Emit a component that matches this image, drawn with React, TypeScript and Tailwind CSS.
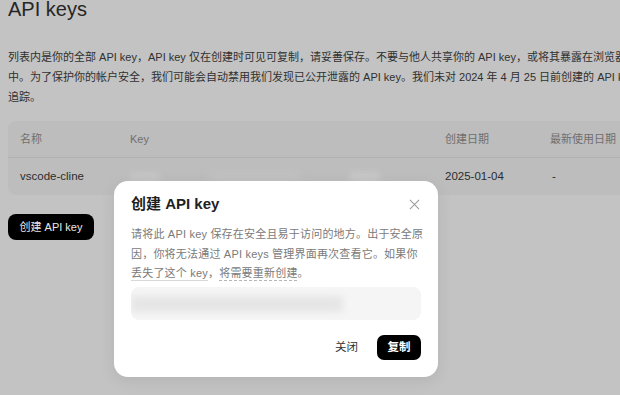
const font = { fontFamily: '"Liberation Sans", "Noto Sans CJK SC", sans-serif' }

function CreatedKeyModal() {
  return (
    <div className="absolute left-[114px] top-[181px] w-[324px] rounded-[14px] bg-white px-[17px] pb-[17px] pt-[12px] shadow-[0_4px_16px_rgba(0,0,0,0.08)]">
      <div className="flex h-[22px] items-center justify-between">
        <h3 className="text-[15px] font-semibold leading-[22px] text-[#1f1f1f]">创建 API key</h3>
        <svg width="11" height="11" viewBox="0 0 12 12" className="mr-[1px]" fill="none" stroke="#9a9a9a" strokeWidth="1.1">
          <path d="M1 1l10 10M11 1L1 11" />
        </svg>
      </div>
      <p className="mt-[10px] whitespace-nowrap text-[11px] leading-[19.5px] tracking-[0.2px] text-[#7a7a7a]">
        请将此 API key 保存在安全且易于访问的地方。出于安全原
        <br />
        因，你将无法通过 API keys 管理界面再次查看它。如果你
        <br />
        <span className="underline decoration-[#d8d8d8] underline-offset-[3px]">丢失了这个 key</span>，
        <span className="underline decoration-dashed decoration-[#b5b5b5] underline-offset-[3px]">将需要重新创建</span>。
      </p>
      <div className="mt-[3.5px] flex h-[33px] items-center overflow-hidden rounded-lg bg-[#f5f5f5]">
        <div className="h-[16px] w-[212px] bg-[#e6e6e6] blur-[3px]" />
      </div>
      <div className="mt-[15px] flex items-center justify-end gap-[19px]">
        <span className="text-[11.5px] text-[#333]">关闭</span>
        <button className="h-[25px] w-[44px] rounded-[7px] bg-black text-[11.5px] font-semibold text-white">复制</button>
      </div>
    </div>
  )
}

export default function App() {
  return (
    <div className="relative h-[395px] w-[620px] overflow-hidden bg-[#c3c3c3]" style={font}>
      <div className="pl-[8px]">
        <h1 className="text-[20px] font-medium leading-[18px] text-[#262626]">API keys</h1>

        <p className="mt-[29px] whitespace-nowrap text-[11px] leading-[20px] text-[#303030]">
          列表内是你的全部 API key，API key 仅在创建时可见可复制，请妥善保存。不要与他人共享你的 API key，或将其暴露在浏览器或其他客户端代码
          <br />
          中。为了保护你的帐户安全，我们可能会自动禁用我们发现已公开泄露的 API key。我们未对 2024 年 4 月 25 日前创建的 API key 的使用情况进行
          <br />
          追踪。
        </p>

        <div className="mt-[14px] w-[700px] rounded-lg bg-[#bdbdbd] text-[11px]">
          <div className="flex h-[37px] items-center border-b border-[#b2b2b2] text-[#6f6f6f]">
            <div className="w-[122px] pl-[12px]">名称</div>
            <div className="w-[315px]">Key</div>
            <div className="w-[105px]">创建日期</div>
            <div>最新使用日期</div>
          </div>
          <div className="flex h-[37px] items-center text-[11.5px] text-[#2c2c2c]">
            <div className="w-[122px] pl-[12px]">vscode-cline</div>
            <div className="flex w-[315px] items-center gap-[50px]">
              <div className="h-[10px] w-[30px] bg-[#c6c6c6] blur-[3px]" />
              <div className="h-[10px] w-[90px] bg-[#c2c2c2] blur-[4px]" />
              <div className="h-[10px] w-[30px] bg-[#c8c8c8] blur-[3px]" />
            </div>
            <div className="w-[105px]">2025-01-04</div>
            <div className="pl-[2px]">-</div>
          </div>
        </div>

        <button className="mt-[19px] h-[26px] w-[86px] rounded-[8px] bg-black text-[11px] text-[#e8e8e8]">创建 API key</button>
      </div>

      <CreatedKeyModal />
    </div>
  )
}
